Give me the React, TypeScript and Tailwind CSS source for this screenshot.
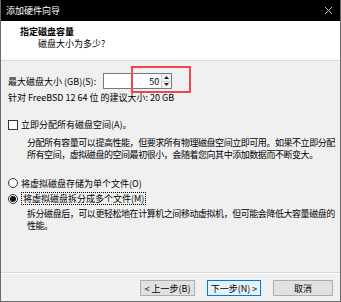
import React from "react";

function CloseIcon() {
  return (
    <svg width="9" height="9" viewBox="0 0 9 9" className="block">
      <path d="M1 1 L8 8 M8 1 L1 8" stroke="#bdbdbd" strokeWidth="1" />
    </svg>
  );
}

function Spinner() {
  return (
    <div className="flex flex-col w-[10px] h-full border-l border-[#cfcfcf]">
      <div className="flex-1 flex items-center justify-center bg-[#f4f4f4] border-b border-[#cfcfcf]">
        <svg width="5" height="3" viewBox="0 0 5 3">
          <path d="M2.5 0 L5 3 L0 3 Z" fill="#222" />
        </svg>
      </div>
      <div className="flex-1 flex items-center justify-center bg-[#f4f4f4]">
        <svg width="5" height="3" viewBox="0 0 5 3">
          <path d="M0 0 L5 0 L2.5 3 Z" fill="#222" />
        </svg>
      </div>
    </div>
  );
}

function Radio({ checked }: { checked?: boolean }) {
  return (
    <span className="w-[10px] h-[10px] rounded-full border border-[#333] bg-white flex items-center justify-center shrink-0">
      {checked && <span className="w-[6px] h-[6px] rounded-full bg-[#111]" />}
    </span>
  );
}

function Btn({ label, primary }: { label: string; primary?: boolean }) {
  return (
    <button
      className={`w-full h-[16px] flex items-center justify-center text-[9px] leading-none text-black ${
        primary ? "bg-[#e5f1fb] border border-[#0078d7]" : "bg-[#e1e1e1] border border-[#adadad]"
      }`}
    >
      {label}
    </button>
  );
}

export default function App() {
  return (
    <div
      className="w-[341px] h-[302px] flex flex-col bg-[#f0f0f0] border-x border-b border-[#6b6b6b] text-black text-[9px] leading-[11px] overflow-hidden whitespace-nowrap"
      style={{ fontFamily: '"Noto Sans CJK SC", "Noto Sans", sans-serif' }}
    >
      {/* title bar */}
      <div className="h-[21px] -mx-px bg-black flex items-center justify-between pl-[6px] pr-[8px] shrink-0">
        <span className="text-white text-[9px]">添加硬件向导</span>
        <CloseIcon />
      </div>

      {/* header */}
      <div className="h-[40px] bg-white border-b border-[#d9d9d9] pt-[5px] pl-[19px] leading-[12px] shrink-0">
        <div className="font-bold">指定磁盘容量</div>
        <div className="pl-[18px]">磁盘大小为多少?</div>
      </div>

      {/* body */}
      <div className="flex-1 flex flex-col pl-[7px]">
        <div className="relative mt-[12px] flex items-center h-[16px]">
          <span>最大磁盘大小 (GB)(S):</span>
          <div className="ml-[7px] w-[69px] h-[16px] bg-white border border-[#7a7a7a] flex">
            <div className="flex-1 flex items-center justify-end pr-[2px]">50</div>
            <Spinner />
          </div>
          <div className="absolute left-[123px] top-[-7px] w-[60px] h-[27px] border-2 border-[#f04848]" />
        </div>
        <div className="mt-[3px]">针对 FreeBSD 12 64 位 的建议大小: 20 GB</div>

        <div className="mt-[16px] flex items-center gap-[3px]">
          <span className="w-[10px] h-[10px] border border-[#333] bg-white shrink-0" />
          <span>立即分配所有磁盘空间(A)。</span>
        </div>
        <div className="mt-[7px] pl-[19px] leading-[12px] tracking-[-0.45px]">
          <div>分配所有容量可以提高性能，但要求所有物理磁盘空间立即可用。如果不立即分配</div>
          <div>所有空间，虚拟磁盘的空间最初很小，会随着您向其中添加数据而不断变大。</div>
        </div>

        <div className="mt-[16px] flex items-center gap-[3px] h-[12px]">
          <Radio />
          <span>将虚拟磁盘存储为单个文件(O)</span>
        </div>
        <div className="mt-[3px] flex items-center gap-[3px] h-[13px]">
          <Radio checked />
          <span className="border border-dotted border-black px-px h-[13px] flex items-center">将虚拟磁盘拆分成多个文件(M)</span>
        </div>
        <div className="mt-[3px] pl-[19px] leading-[12px] tracking-[-0.45px]">
          <div>拆分磁盘后，可以更轻松地在计算机之间移动虚拟机，但可能会降低大容量磁盘的</div>
          <div>性能。</div>
        </div>
      </div>

      {/* footer */}
      <div className="shrink-0 border-t border-[#d8d8d8] shadow-[inset_0_1px_0_#ffffff]">
        <div className="h-[28px] flex items-center justify-end gap-[12px] pr-[7px] pt-[2px]">
          <div className="w-[55px]"><Btn label="< 上一步(B)" /></div>
          <div className="w-[54px]"><Btn label="下一步(N) >" primary /></div>
          <div className="w-[60px]"><Btn label="取消" /></div>
        </div>
      </div>
    </div>
  );
}
